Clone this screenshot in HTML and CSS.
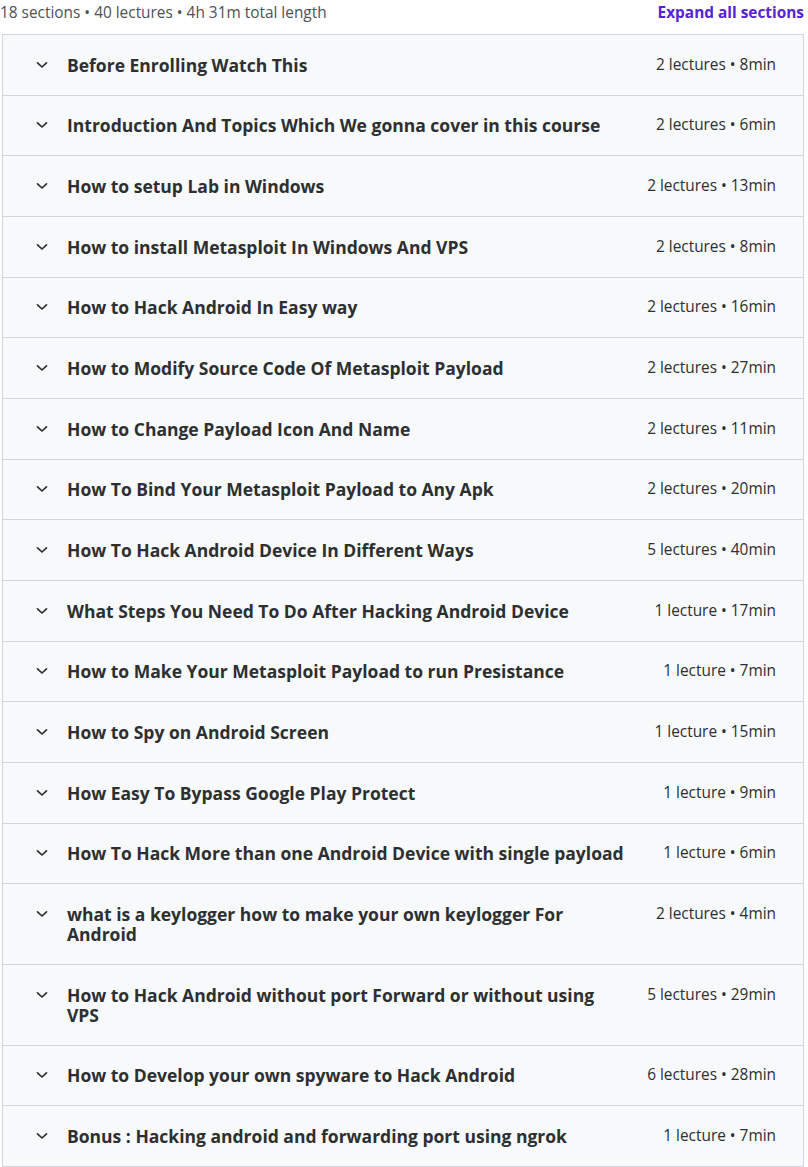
FILE: index.html
```html
<!DOCTYPE html>
<html lang="en">
<head>
<meta charset="utf-8">
<title>Course content</title>
<link rel="stylesheet" href="styles.css">
</head>
<body>
<div class="curriculum">
  <div class="curriculum-header">
    <span class="curriculum-stats">18 sections • 40 lectures • 4h 31m total length</span>
    <button class="expand-all" type="button">Expand all sections</button>
  </div>
  <div class="section-list">
    <div class="section"><span class="chevron"><svg viewBox="0 0 12 8"><path d="M1.5 1.8l4.5 4.2 4.5-4.2"/></svg></span><span class="section-title">Before Enrolling Watch This</span><span class="section-meta">2 lectures • 8min</span></div>
    <div class="section"><span class="chevron"><svg viewBox="0 0 12 8"><path d="M1.5 1.8l4.5 4.2 4.5-4.2"/></svg></span><span class="section-title">Introduction And Topics Which We gonna cover in this course</span><span class="section-meta">2 lectures • 6min</span></div>
    <div class="section"><span class="chevron"><svg viewBox="0 0 12 8"><path d="M1.5 1.8l4.5 4.2 4.5-4.2"/></svg></span><span class="section-title">How to setup Lab in Windows</span><span class="section-meta">2 lectures • 13min</span></div>
    <div class="section"><span class="chevron"><svg viewBox="0 0 12 8"><path d="M1.5 1.8l4.5 4.2 4.5-4.2"/></svg></span><span class="section-title">How to install Metasploit In Windows And VPS</span><span class="section-meta">2 lectures • 8min</span></div>
    <div class="section"><span class="chevron"><svg viewBox="0 0 12 8"><path d="M1.5 1.8l4.5 4.2 4.5-4.2"/></svg></span><span class="section-title">How to Hack Android In Easy way</span><span class="section-meta">2 lectures • 16min</span></div>
    <div class="section"><span class="chevron"><svg viewBox="0 0 12 8"><path d="M1.5 1.8l4.5 4.2 4.5-4.2"/></svg></span><span class="section-title">How to Modify Source Code Of Metasploit Payload</span><span class="section-meta">2 lectures • 27min</span></div>
    <div class="section"><span class="chevron"><svg viewBox="0 0 12 8"><path d="M1.5 1.8l4.5 4.2 4.5-4.2"/></svg></span><span class="section-title">How to Change Payload Icon And Name</span><span class="section-meta">2 lectures • 11min</span></div>
    <div class="section"><span class="chevron"><svg viewBox="0 0 12 8"><path d="M1.5 1.8l4.5 4.2 4.5-4.2"/></svg></span><span class="section-title">How To Bind Your Metasploit Payload to Any Apk</span><span class="section-meta">2 lectures • 20min</span></div>
    <div class="section"><span class="chevron"><svg viewBox="0 0 12 8"><path d="M1.5 1.8l4.5 4.2 4.5-4.2"/></svg></span><span class="section-title">How To Hack Android Device In Different Ways</span><span class="section-meta">5 lectures • 40min</span></div>
    <div class="section"><span class="chevron"><svg viewBox="0 0 12 8"><path d="M1.5 1.8l4.5 4.2 4.5-4.2"/></svg></span><span class="section-title">What Steps You Need To Do After Hacking Android Device</span><span class="section-meta">1 lecture • 17min</span></div>
    <div class="section"><span class="chevron"><svg viewBox="0 0 12 8"><path d="M1.5 1.8l4.5 4.2 4.5-4.2"/></svg></span><span class="section-title">How to Make Your Metasploit Payload to run Presistance</span><span class="section-meta">1 lecture • 7min</span></div>
    <div class="section"><span class="chevron"><svg viewBox="0 0 12 8"><path d="M1.5 1.8l4.5 4.2 4.5-4.2"/></svg></span><span class="section-title">How to Spy on Android Screen</span><span class="section-meta">1 lecture • 15min</span></div>
    <div class="section"><span class="chevron"><svg viewBox="0 0 12 8"><path d="M1.5 1.8l4.5 4.2 4.5-4.2"/></svg></span><span class="section-title">How Easy To Bypass Google Play Protect</span><span class="section-meta">1 lecture • 9min</span></div>
    <div class="section"><span class="chevron"><svg viewBox="0 0 12 8"><path d="M1.5 1.8l4.5 4.2 4.5-4.2"/></svg></span><span class="section-title">How To Hack More than one Android Device with single payload</span><span class="section-meta">1 lecture • 6min</span></div>
    <div class="section"><span class="chevron"><svg viewBox="0 0 12 8"><path d="M1.5 1.8l4.5 4.2 4.5-4.2"/></svg></span><span class="section-title">what is a keylogger how to make your own keylogger For Android</span><span class="section-meta">2 lectures • 4min</span></div>
    <div class="section"><span class="chevron"><svg viewBox="0 0 12 8"><path d="M1.5 1.8l4.5 4.2 4.5-4.2"/></svg></span><span class="section-title">How to Hack Android without port Forward or without using VPS</span><span class="section-meta">5 lectures • 29min</span></div>
    <div class="section"><span class="chevron"><svg viewBox="0 0 12 8"><path d="M1.5 1.8l4.5 4.2 4.5-4.2"/></svg></span><span class="section-title">How to Develop your own spyware to Hack Android</span><span class="section-meta">6 lectures • 28min</span></div>
    <div class="section"><span class="chevron"><svg viewBox="0 0 12 8"><path d="M1.5 1.8l4.5 4.2 4.5-4.2"/></svg></span><span class="section-title">Bonus : Hacking android and forwarding port using ngrok</span><span class="section-meta">1 lecture • 7min</span></div>
  </div>
</div>
</body>
</html>
```

FILE: styles.css
```css
html, body {
  margin: 0;
  padding: 0;
  background: #ffffff;
}

body {
  font-family: "Open Sans", "Liberation Sans", sans-serif;
  color: #2d2f31;
  width: 808px;
}

.curriculum {
  padding: 0 4px 0 2px;
}

.curriculum-header {
  display: flex;
  justify-content: space-between;
  align-items: center;
  height: 25px;
  margin-left: -2px;
  margin-bottom: 9px;
}

.curriculum-stats {
  font-size: 15.4px;
  color: #4d5257;
}

.expand-all {
  border: 0;
  background: none;
  padding: 0;
  font-family: inherit;
  font-size: 15.4px;
  font-weight: 700;
  color: #5624d0;
  cursor: pointer;
}

.section-list {
  border: 1px solid #d1d7dc;
  border-bottom: 0;
}

.section {
  display: flex;
  align-items: flex-start;
  padding: 19.83px 27px 19.83px 32px;
  background: #f7f9fa;
  border-bottom: 1px solid #d1d7dc;
}

.chevron {
  flex: none;
  width: 14px;
  height: 20px;
  display: flex;
  align-items: center;
  justify-content: center;
  margin-right: 18px;
}

.chevron svg {
  width: 12px;
  height: 8px;
  fill: none;
  stroke: #2d2f31;
  stroke-width: 1.7;
  stroke-linecap: round;
  stroke-linejoin: round;
}

.section-title {
  flex: 1;
  font-size: 17.5px;
  font-weight: 700;
  line-height: 20px;
  color: #2d2f31;
}

.section-meta {
  flex: none;
  margin-left: 32px;
  font-size: 15.4px;
  line-height: 20px;
  color: #2d2f31;
}
```
